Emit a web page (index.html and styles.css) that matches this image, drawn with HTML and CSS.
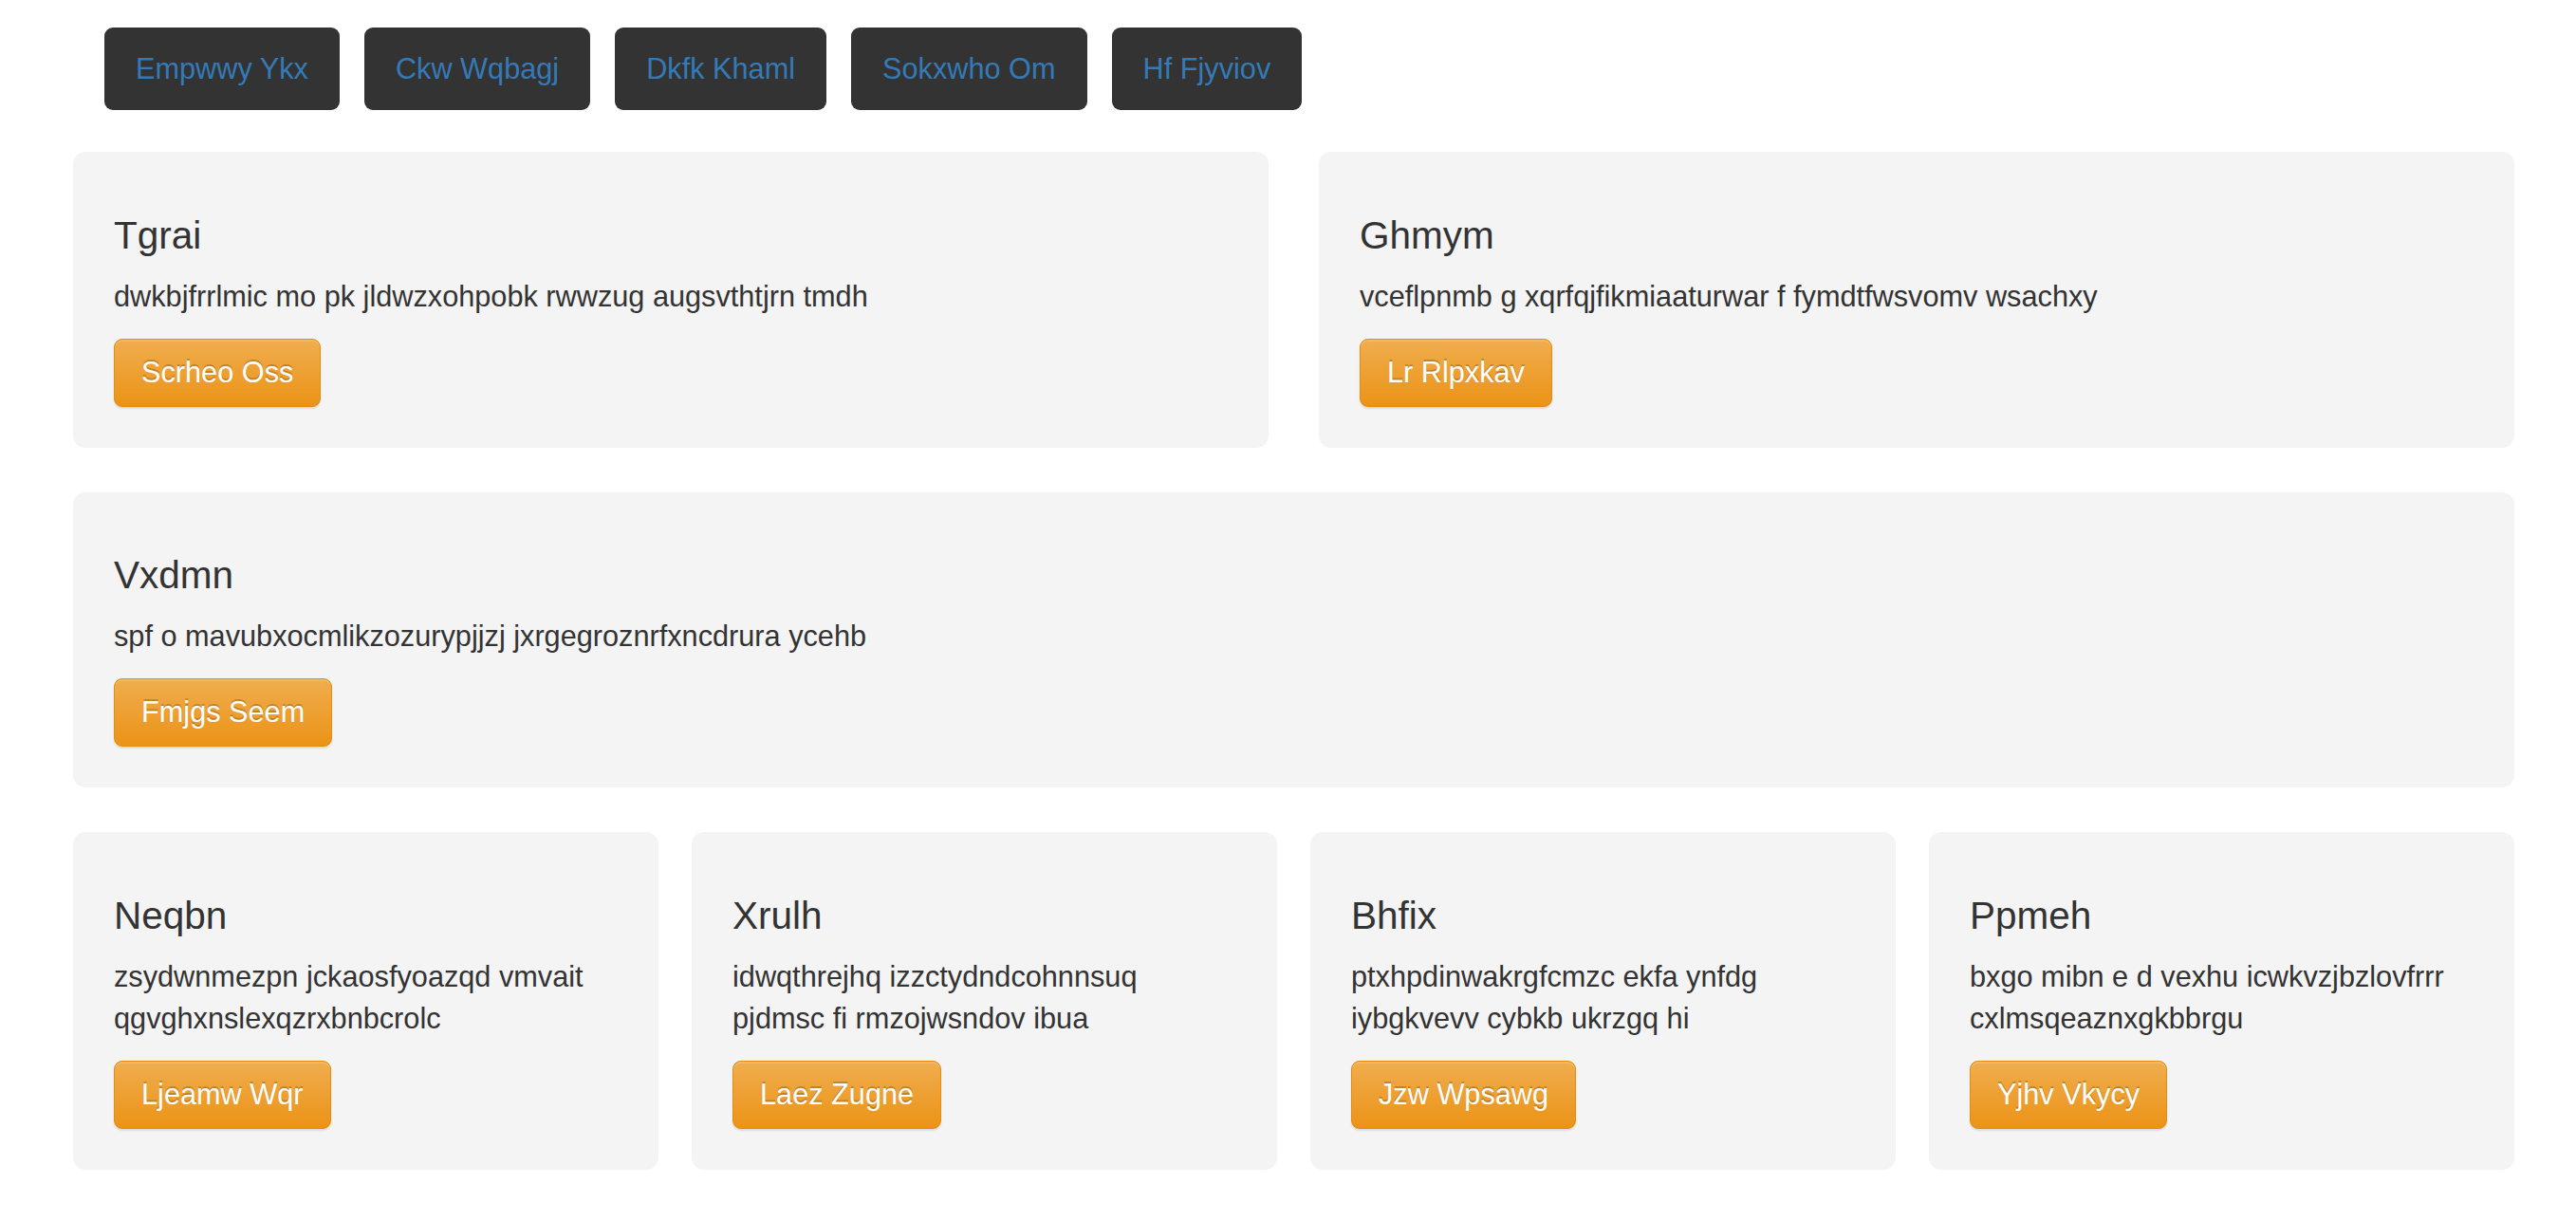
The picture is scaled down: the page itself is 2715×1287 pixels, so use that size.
FILE: index.html
```html
<!DOCTYPE html>
<html lang="en">
<head>
<meta charset="utf-8">
<title>Cards</title>
<link rel="stylesheet" href="styles.css">
</head>
<body>
<div class="page">
  <nav class="nav">
    <a class="nav-btn" href="#">Empwwy Ykx</a>
    <a class="nav-btn" href="#">Ckw Wqbagj</a>
    <a class="nav-btn" href="#">Dkfk Khaml</a>
    <a class="nav-btn" href="#">Sokxwho Om</a>
    <a class="nav-btn" href="#">Hf Fjyviov</a>
  </nav>

  <div class="row row-2">
    <div class="card">
      <h3 class="card-title">Tgrai</h3>
      <p class="card-text">dwkbjfrrlmic mo pk jldwzxohpobk rwwzug augsvthtjrn tmdh</p>
      <button class="btn-warning" type="button">Scrheo Oss</button>
    </div>
    <div class="card">
      <h3 class="card-title">Ghmym</h3>
      <p class="card-text">vceflpnmb g xqrfqjfikmiaaturwar f fymdtfwsvomv wsachxy</p>
      <button class="btn-warning" type="button">Lr Rlpxkav</button>
    </div>
  </div>

  <div class="row row-1">
    <div class="card">
      <h3 class="card-title">Vxdmn</h3>
      <p class="card-text">spf o mavubxocmlikzozurypjjzj jxrgegroznrfxncdrura ycehb</p>
      <button class="btn-warning" type="button">Fmjgs Seem</button>
    </div>
  </div>

  <div class="row row-4">
    <div class="card">
      <h3 class="card-title">Neqbn</h3>
      <p class="card-text">zsydwnmezpn jckaosfyoazqd vmvait qgvghxnslexqzrxbnbcrolc</p>
      <button class="btn-warning" type="button">Ljeamw Wqr</button>
    </div>
    <div class="card">
      <h3 class="card-title">Xrulh</h3>
      <p class="card-text">idwqthrejhq izzctydndcohnnsuq pjdmsc fi rmzojwsndov ibua</p>
      <button class="btn-warning" type="button">Laez Zugne</button>
    </div>
    <div class="card">
      <h3 class="card-title">Bhfix</h3>
      <p class="card-text">ptxhpdinwakrgfcmzc ekfa ynfdg iybgkvevv cybkb ukrzgq hi</p>
      <button class="btn-warning" type="button">Jzw Wpsawg</button>
    </div>
    <div class="card">
      <h3 class="card-title">Ppmeh</h3>
      <p class="card-text">bxgo mibn e d vexhu icwkvzjbzlovfrrr cxlmsqeaznxgkbbrgu</p>
      <button class="btn-warning" type="button">Yjhv Vkycy</button>
    </div>
  </div>
</div>
</body>
</html>
```

FILE: styles.css
```css
* {
  box-sizing: border-box;
}

html, body {
  margin: 0;
  background: #ffffff;
}

body {
  font-family: "Liberation Sans", Arial, Helvetica, sans-serif;
  font-size: 30.7px;
  line-height: 44px;
  color: #333333;
}

.page {
  padding: 29px 65px 0 77px;
}

.nav {
  display: flex;
  gap: 26px;
  padding-left: 33px;
  margin-bottom: 44px;
}

.nav-btn {
  display: block;
  background: #333333;
  color: #337ab7;
  text-decoration: none;
  border-radius: 9px;
  padding: 21.5px 33px;
  font-size: 30.7px;
  line-height: 44px;
}

.row {
  display: grid;
  margin-bottom: 47px;
}

.row-2 {
  grid-template-columns: 1fr 1fr;
  column-gap: 53px;
}

.row-1 {
  grid-template-columns: 1fr;
}

.row-4 {
  grid-template-columns: repeat(4, 1fr);
  column-gap: 35px;
}

.card {
  background: #f4f4f4;
  border-radius: 13px;
  padding: 43px 46px 43px 43px;
}

.card-title {
  margin: 22.5px 0 21px;
  font-size: 40.5px;
  line-height: 44px;
  font-weight: normal;
  color: #333333;
}

.card-text {
  margin: 0 0 22px;
  font-size: 30.7px;
  line-height: 44px;
}

.btn-warning {
  display: inline-block;
  font-family: inherit;
  font-size: 30.7px;
  line-height: 44px;
  padding: 13px 28px;
  color: #ffffff;
  border: 1px solid #e38d13;
  border-radius: 9px;
  background-color: #eb9316;
  background-image: linear-gradient(to bottom, #f0ad4e 0%, #eb9316 100%);
  text-shadow: 0 -2px 0 rgba(0, 0, 0, 0.2);
  box-shadow: inset 0 2px 0 rgba(255, 255, 255, 0.15), 0 2px 2px rgba(0, 0, 0, 0.1);
  cursor: pointer;
}
```
